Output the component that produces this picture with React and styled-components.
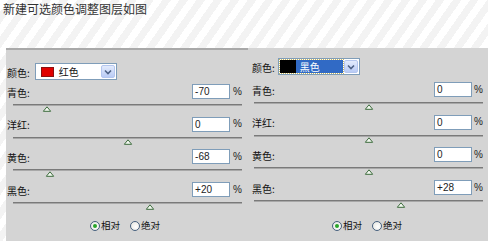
import React from 'react';
import styled, {createGlobalStyle} from 'styled-components';

const Global = createGlobalStyle`
  html, body { margin: 0; padding: 0; overflow: hidden; }
  body { font-family: "Noto Sans CJK SC", "Liberation Sans", sans-serif; }
`;

const Page = styled.div`
  width: 488px;
  height: 241px;
  display: flex;
  flex-direction: column;
  background: repeating-linear-gradient(125deg, #ffffff 0 7px, #f3f3f3 7px 14px);
`;

const Title = styled.div`
  height: 48px;
  box-sizing: border-box;
  padding: 2px 0 0 3px;
  font: 12px/14px "Noto Sans CJK SC", sans-serif;
  color: #333;
`;

const Panel = styled.div`
  flex: 1;
  margin-left: 6px;
  display: grid;
  grid-template-columns: 242px 240px;
`;

const Column = styled.section`
  display: flex;
  flex-direction: column;
  box-sizing: border-box;
  padding: ${p => p.$pad};
  background: #d4d4d4;
  border-top: ${p => (p.$ruled ? '2px solid #a9a9a9' : 'none')};
`;

const ColorRow = styled.div`
  display: flex;
  align-items: center;
  gap: ${p => p.$gap}px;
  height: 17px;
  margin-bottom: ${p => p.$after}px;
`;

const Label = styled.span`
  font: 10px/1 "Noto Sans CJK SC", sans-serif;
  color: #111;
  padding-top: 2px;
`;

const Select = styled.div`
  display: flex;
  align-items: stretch;
  width: 82px;
  height: 17px;
  box-sizing: border-box;
  padding: 1px;
  border: 1px solid #7f9db9;
  background: #fff;
`;

const SelectValue = styled.div`
  flex: 1;
  display: flex;
  align-items: center;
  gap: ${p => (p.$active ? 5 : 6)}px;
  padding-left: ${p => (p.$active ? 1 : 5)}px;
  margin-right: 1px;
  background: ${p => (p.$active ? '#316ac5' : 'transparent')};
  outline: ${p => (p.$active ? '1px dotted #c8b860' : 'none')};
  color: ${p => (p.$active ? '#fff' : '#111')};
  font: 10px/1 "Noto Sans CJK SC", sans-serif;
`;

const Swatch = styled.span`
  width: ${p => p.$w}px;
  height: ${p => p.$h}px;
  background: ${p => p.$color};
  box-shadow: 0 0 0 1px ${p => p.$edge};
`;

const ArrowButton = styled.div`
  width: 14px;
  display: flex;
  align-items: center;
  justify-content: center;
  border-radius: 2px;
  background: linear-gradient(#e3ebfd, #b9cbf5);
  border: 1px solid #b4c6ef;
  box-sizing: border-box;
`;

const Slider = styled.div`
  height: 32.7px;
  display: flex;
  flex-direction: column;
`;

const FieldRow = styled.div`
  display: flex;
  align-items: center;
  justify-content: space-between;
  height: 15px;
`;

const Amount = styled.div`
  display: flex;
  align-items: center;
  gap: ${p => p.$gap}px;
`;

const Input = styled.div`
  width: 38px;
  height: 15px;
  box-sizing: border-box;
  padding-left: 2px;
  border: 1px solid #7f9db9;
  background: #fff;
  font: 10px/13px "Liberation Sans", sans-serif;
  color: #222;
`;

const Percent = styled.span`
  font: 10px/1 "Liberation Sans", sans-serif;
  color: #222;
`;

const Track = styled.div`
  position: relative;
  margin: 5px 0 0 ${p => p.$inset}px;
  height: 1px;
  background: #7a7a7a;
  border-bottom: 1px solid #a8a8a8;
`;

const Thumb = styled.svg`
  position: absolute;
  top: 2px;
  transform: translateX(-50%);
`;

const RadioRow = styled.div`
  margin-top: auto;
  display: flex;
  align-items: center;
  gap: 10px;
  height: 11px;
  padding-left: ${p => p.$indent}px;
`;

const Option = styled.label`
  display: flex;
  align-items: center;
  gap: 1px;
  font: 9.5px/1 "Noto Sans CJK SC", sans-serif;
  color: #111;
`;

const Radio = styled.span`
  width: 10px;
  height: 10px;
  box-sizing: border-box;
  border-radius: 50%;
  border: 1px solid #46607e;
  background: radial-gradient(circle at 60% 60%, #ffffff, #e2e2dc);
  display: flex;
  align-items: center;
  justify-content: center;
`;

const Dot = styled.span`
  width: 4px;
  height: 4px;
  border-radius: 50%;
  background: #2aa52a;
`;

const Chevron = () => (
  <svg width="8" height="6" viewBox="0 0 8 6">
    <path d="M1 1.5 L4 4.5 L7 1.5" fill="none" stroke="#4d6185" strokeWidth="1.6" />
  </svg>
);

const Triangle = ({value}) => (
  <Thumb width="9" height="6" viewBox="0 0 9 6" style={{left: `${(value + 100) / 2}%`}}>
    <path d="M4.5 0.8 L8.2 5.3 L0.8 5.3 Z" fill="#f4faf2" stroke="#3d6b3d" strokeWidth="1" />
  </Thumb>
);

const left = [
  {name: '青色:', value: -70, text: '-70'},
  {name: '洋红:', value: 0, text: '0'},
  {name: '黄色:', value: -68, text: '-68'},
  {name: '黑色:', value: 20, text: '+20'},
];

const right = [
  {name: '青色:', value: 0, text: '0'},
  {name: '洋红:', value: 0, text: '0'},
  {name: '黄色:', value: 0, text: '0'},
  {name: '黑色:', value: 28, text: '+28'},
];

function Sliders({rows, inset, gap}) {
  return rows.map(r => (
    <Slider key={r.name}>
      <FieldRow>
        <Label>{r.name}</Label>
        <Amount $gap={gap}>
          <Input>{r.text}</Input>
          <Percent>%</Percent>
        </Amount>
      </FieldRow>
      <Track $inset={inset}>
        <Triangle value={r.value} />
      </Track>
    </Slider>
  ));
}

function Method({indent}) {
  return (
    <RadioRow $indent={indent}>
      <Option><Radio><Dot /></Radio>相对</Option>
      <Option><Radio />绝对</Option>
    </RadioRow>
  );
}

export default function App() {
  return (
    <Page>
      <Global />
      <Title>新建可选颜色调整图层如图</Title>
      <Panel>
        <Column $ruled $pad="13px 6px 10px 1px">
          <ColorRow $gap={5} $after={4}>
            <Label>颜色:</Label>
            <Select>
              <SelectValue>
                <Swatch $w={11} $h={8} $color="#e00000" $edge="#8a1010" />
                红色
              </SelectValue>
              <ArrowButton><Chevron /></ArrowButton>
            </Select>
          </ColorRow>
          <Sliders rows={left} inset={6} gap={3} />
          <Method indent={83} />
        </Column>
        <Column $pad="10px 5px 10px 4px">
          <ColorRow $gap={3} $after={7}>
            <Label>颜色:</Label>
            <Select>
              <SelectValue $active>
                <Swatch $w={14} $h={11} $color="#000" $edge="#000" />
                黑色
              </SelectValue>
              <ArrowButton><Chevron /></ArrowButton>
            </Select>
          </ColorRow>
          <Sliders rows={right} inset={2} gap={2} />
          <Method indent={80} />
        </Column>
      </Panel>
    </Page>
  );
}
